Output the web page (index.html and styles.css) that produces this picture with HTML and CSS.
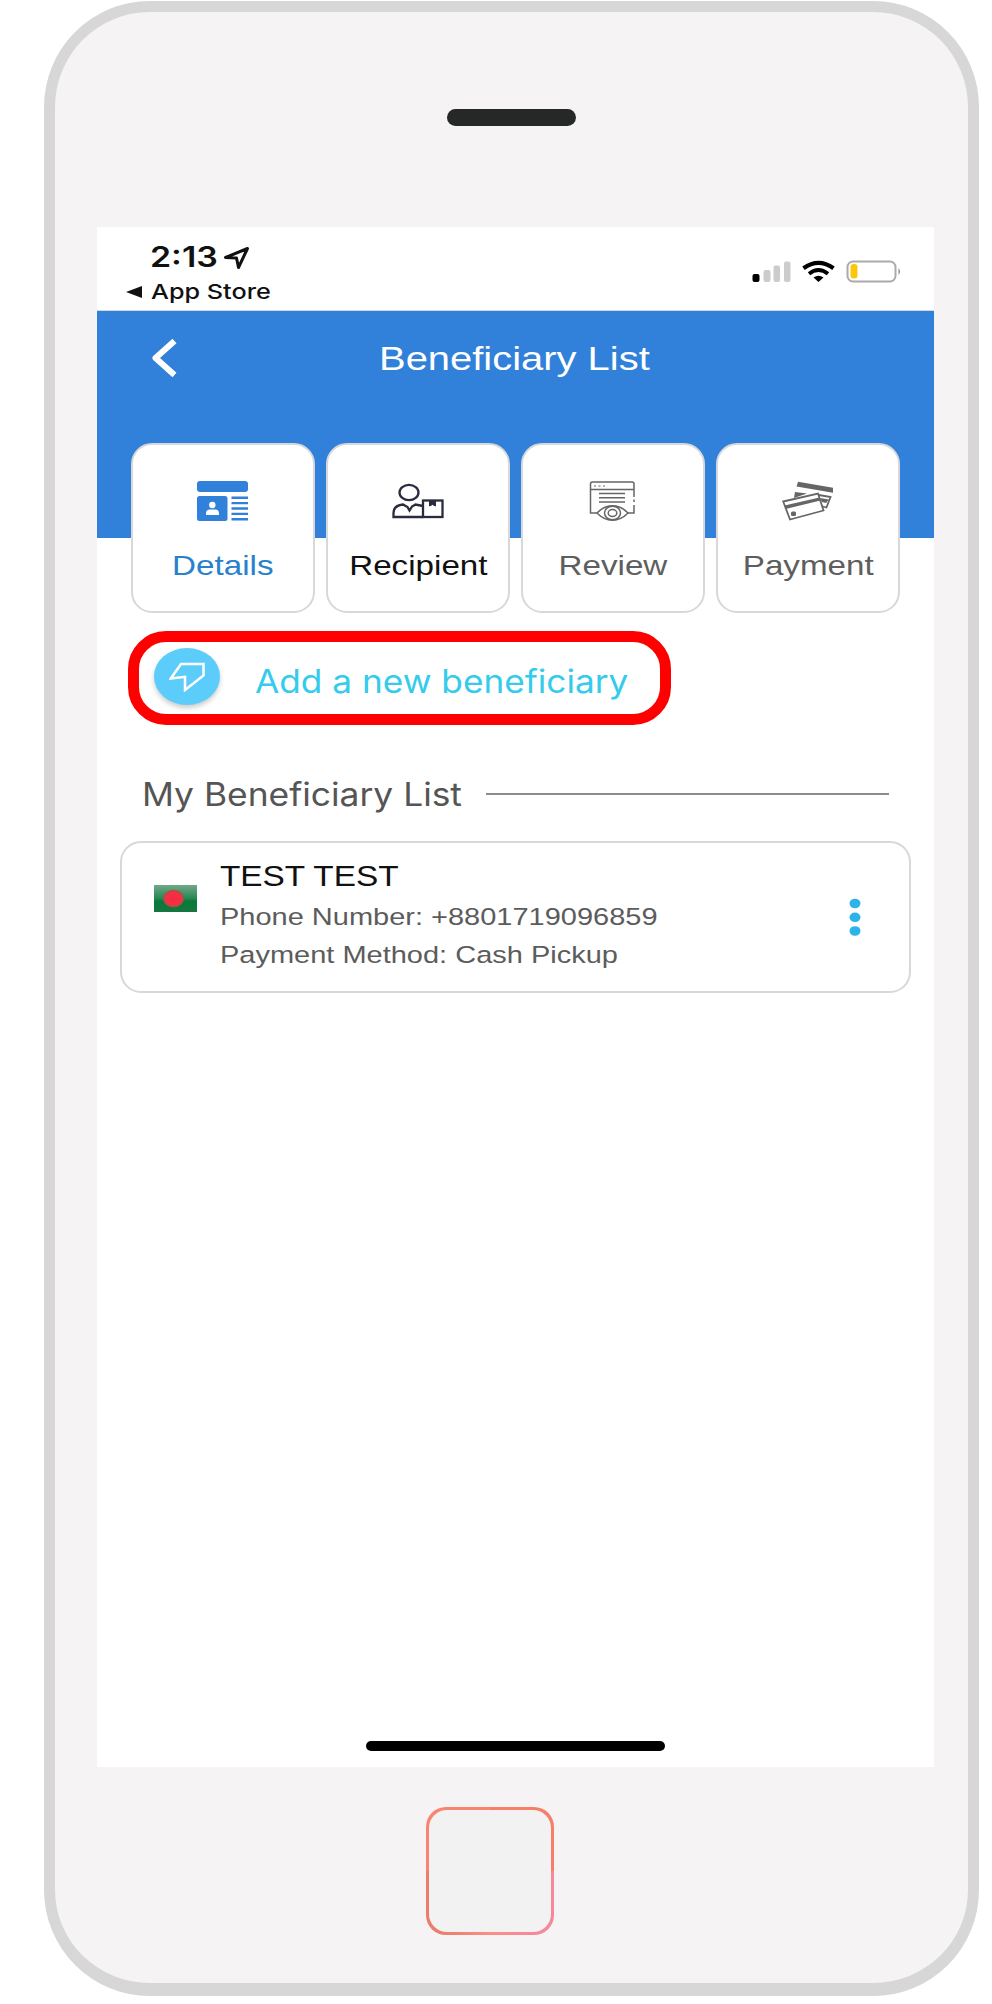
FILE: index.html
```html
<!DOCTYPE html>
<html lang="en">
<head>
<meta charset="utf-8">
<title>Beneficiary List</title>
<link rel="stylesheet" href="styles.css">
</head>
<body>
<div class="phone">
  <div class="speaker"></div>
  <main class="screen">
    <div class="status">
      <div class="status-left">
        <div class="time-row">
          <span class="time">2:13</span>
          <svg class="location" width="27" height="24" viewBox="0 0 27 24"><path d="M2.500 11.500 24.500 2.500 15.500 21.500 13.500 12z" fill="none" stroke="#111" stroke-width="3" stroke-linejoin="round"/></svg>
        </div>
        <div class="back-row">
          <svg width="16" height="12" viewBox="0 0 16 12"><path d="M0 6 16 0V12z" fill="#111"/></svg>
          <span class="back-app">App Store</span>
        </div>
      </div>
      <svg class="status-icons" width="152" height="24" viewBox="0 0 152 24">
        <rect x="0.5" y="14" width="7" height="8" rx="2" fill="#000"/>
        <g fill="#ccc"><rect x="11.5" y="10" width="7" height="12" rx="2"/><rect x="21.5" y="5.500" width="6.500" height="16.500" rx="2"/><rect x="32" y="1.500" width="6.500" height="20.500" rx="2"/></g>
        <g fill="none" stroke="#000" stroke-width="4.200"><path d="M51.500 8.200Q66.500-2.500 81.500 8.200"/><path d="M57 13.800Q66.500 6.300 76 13.800" stroke-width="3.900"/></g>
        <path d="M61.500 17.500Q66.500 14 71.500 17.500L66.500 22z" fill="#000"/>
        <rect x="95.500" y="1.500" width="48" height="20" rx="5.500" fill="none" stroke="#aaa" stroke-width="2"/>
        <rect x="98.500" y="4" width="7" height="14.500" rx="3" fill="#fbc70c"/>
        <path d="M146.500 8Q149.500 11.500 146.500 15z" fill="#888"/>
      </svg>
    </div>
    <header class="header">
      <svg class="back" width="30" height="42" viewBox="0 0 30 42"><path d="M24.500 4 5.500 21 24.500 38" fill="none" stroke="#fff" stroke-width="6" stroke-linejoin="round"/></svg>
      <h1 class="title">Beneficiary List</h1>
    </header>
    <nav class="tabs">
      <div class="tab active">
        <svg width="52" height="40" viewBox="0 0 52 40">
          <g fill="#3180d9"><rect x="0" y="0" width="51" height="11" rx="3"/><rect x="0" y="15" width="30.500" height="25" rx="2.500"/>
          <path d="M34.500 15.500h16.500v2.400H34.500zM34.500 20.900h16.500v2.400H34.500zM34.500 26.300h16.500v2.400H34.500zM34.500 31.700h16.500v2.400H34.500zM34.500 37.100h16.500v2.400H34.500z"/></g>
          <circle cx="15.300" cy="24" r="3.200" fill="#fff"/><path d="M9 34v-1.500q0-4 4-4h5q4 0 4 4V34z" fill="#fff"/>
        </svg>
        <span class="label">Details</span>
      </div>
      <div class="tab current">
        <svg width="52" height="40" viewBox="0 0 52 40" fill="none" stroke="#292b3e" stroke-width="2.300">
          <ellipse cx="17" cy="11.500" rx="9.500" ry="7.700"/>
          <path d="M31 36H1.500V32Q1.500 24.500 11 23.500L15.500 26 17.500 29.500 20 25.500 23.500 23.500 31 25"/>
          <rect x="31" y="19.500" width="19.500" height="16.500"/>
          <path d="M37.500 20v5l3-1.500 3 1.500V20z" fill="#292b3e" stroke-width="1"/>
        </svg>
        <span class="label">Recipient</span>
      </div>
      <div class="tab">
        <svg width="52" height="40" viewBox="0 0 52 40" fill="none" stroke="#666" stroke-width="1.500">
          <path d="M10 32H3.500V3Q3.500 1 5.500 1H45Q47 1 47 3V16M47 18.500v2.500M47 24v8H41M3.500 8.500H47"/>
          <path d="M7 5h2M11.500 5h2M16 5h2" stroke="#999"/>
          <path d="M12 12.500H38M12 16.800H38M12 21.100H38"/>
          <path d="M10 32Q17 24.700 25.500 24.700T41 32Q34 39.200 25.500 39.200T10 32z"/>
          <ellipse cx="25.500" cy="32" rx="8" ry="6.800"/><ellipse cx="25.500" cy="32" rx="4.300" ry="3.500"/>
        </svg>
        <span class="label">Review</span>
      </div>
      <div class="tab">
        <svg width="52" height="40" viewBox="0 0 52 40">
          <path d="M16 .8 51 6.800V11.800L14.500 5.500z" fill="#666"/>
          <path d="M13 11 25 12.500 12 17z" fill="#666"/>
          <g fill="none" stroke="#666" stroke-width="1.800"><path d="M34 13.500 48.500 16 44.500 26.500 39 25"/><path d="M1.200 20.500 36 12.500 41.500 29.500 8 38.500z" fill="#fff"/></g>
          <path d="M2.500 24.500 37.500 16.500 38.500 19.500 3.500 28z" fill="#666"/><path d="M38 17 47 18.500 44 22 40 21z" fill="#666"/>
          <rect x="9" y="30.500" width="5" height="4.500" rx="1.500" fill="#666"/>
        </svg>
        <span class="label">Payment</span>
      </div>
    </nav>
    <div class="add">
      <span class="add-icon"><svg width="36" height="30" viewBox="0 0 36 30"><path d="M1.800 16.500 12 2H34.500V13.500L16 28V14.800z" fill="none" stroke="#fff" stroke-width="2.500"/></svg></span>
      <span class="add-text">Add a new beneficiary</span>
    </div>
    <div class="section">
      <h2 class="section-title">My Beneficiary List</h2>
      <span class="rule"></span>
    </div>
    <article class="card">
      <svg class="flag" width="43" height="27" viewBox="0 0 43 27">
        <defs><linearGradient id="green" x1="0" y1="0" x2="0" y2="1"><stop offset="0" stop-color="#70a987"/><stop offset=".5" stop-color="#288653"/><stop offset=".6" stop-color="#077a3b"/><stop offset="1" stop-color="#16773e"/></linearGradient>
        <radialGradient id="red"><stop offset="0" stop-color="#ff2440"/><stop offset=".7" stop-color="#ec3446"/><stop offset="1" stop-color="#a8503f"/></radialGradient></defs>
        <rect width="43" height="27" fill="url(#green)"/><ellipse cx="19.500" cy="13.500" rx="10.500" ry="8.800" fill="url(#red)"/>
      </svg>
      <div class="info">
        <div class="name">TEST TEST</div>
        <div class="line phone-number">Phone Number: +8801719096859</div>
        <div class="line">Payment Method: Cash Pickup</div>
      </div>
      <svg class="more" width="12" height="38" viewBox="0 0 12 38" fill="#2bb3ea"><ellipse cx="6" cy="5.500" rx="5.500" ry="4.800"/><ellipse cx="6" cy="19.300" rx="5.500" ry="4.800"/><ellipse cx="6" cy="33" rx="5.500" ry="4.800"/></svg>
    </article>
    <div class="home-indicator"></div>
  </main>
  <div class="home-button"><span class="home-face"></span></div>
</div>
</body>
</html>
```
FILE: styles.css
```css
* { box-sizing: border-box; }
body { margin: 0; background: #fff; font-family: "Liberation Sans", Arial, sans-serif; }
svg { display: block; flex: none; }
.phone {
  width: 935px; height: 1995px; margin: 1px 0 0 44px;
  border: 11px solid #d7d7d7; border-bottom-width: 13px; border-radius: 106px;
  background: #f5f3f4; display: flex; flex-direction: column;
}
.speaker { width: 129px; height: 17px; margin: 97px 0 0 392px; border-radius: 9px; background: #252827; flex: none; }
.screen { width: 837px; height: 1540px; margin: 101px 0 0 42px; background: #fff; display: flex; flex-direction: column; flex: none; }
.time, .back-app, .title, .label, .add-text, .section-title, .name, .line { white-space: nowrap; transform-origin: 0 50%; }

.status { height: 84px; flex: none; display: flex; justify-content: space-between; padding: 14px 30px 0 29px; border-bottom: 1px solid #d5d6da; font-family: Inter, sans-serif; color: #111; }
.time-row { display: flex; height: 32px; padding-left: 24px; }
.time { width: 73px; font-size: 28px; font-weight: 600; line-height: 32px; transform: scaleX(1.21); }
.location { margin-top: 5px; }
.back-row { display: flex; align-items: center; gap: 9px; margin-top: 7px; }
.back-app { font-size: 20.500px; font-weight: 500; line-height: 24px; transform: scaleX(1.23); }
.status-icons { margin-top: 19px; }

.header { height: 227px; flex: none; display: flex; padding: 26px 0 0 53px; background: #3180d9; color: #fff; }
.title { margin: 2px 0 0 199px; font-size: 33px; line-height: 40px; font-weight: 400; transform: scaleX(1.21); }

.tabs { position: relative; flex: none; display: grid; grid-template-columns: repeat(4, 184px); gap: 11px; margin: -95px 0 0 34px; }
.tab { height: 170px; border: 2px solid #d8d8da; border-radius: 21px; background: #fff; display: flex; flex-direction: column; align-items: center; padding-top: 36px; color: #5e5e5e; }
.label { margin-top: 29px; font-size: 28px; line-height: 32px; transform-origin: 50% 50%; transform: scaleX(1.185); }
.active { color: #2980cc; }
.current { color: #111; }

.add { width: 543px; height: 94px; flex: none; margin: 18px 0 0 31px; border: 11px solid #f00; border-radius: 38px; display: flex; padding: 6px 0 0 15px; }
.add-icon { width: 66px; height: 57px; border-radius: 50%; background: #5ccdfb; box-shadow: 0 3px 5px #0003; display: flex; align-items: center; justify-content: center; }
.add-text { margin: 14px 0 0 35px; font-family: Inter, sans-serif; font-size: 32px; line-height: 40px; color: #35cbec; transform: scaleX(1.1); }

.section { display: flex; flex: none; align-items: center; margin: 49px 45px 0 45px; }
.section-title { position: relative; top: 1px; width: 344px; margin: 0; font-family: Inter, sans-serif; font-size: 32px; font-weight: 400; line-height: 40px; color: #555; transform: scaleX(1.105); }
.rule { flex: 1; height: 2px; background: #8d8d8d; }

.card { height: 152px; flex: none; margin: 27px 23px 0; border: 2px solid #d8d8d8; border-radius: 21px; display: flex; padding: 17px 48px 0 32px; }
.flag { margin-top: 25px; }
.info { flex: 1; margin-left: 23px; }
.name { margin: 0 0 6px; font-size: 29px; line-height: 32px; color: #111; transform: scaleX(1.15); width: 160px; }
.line { width: 300px; font-size: 24.500px; line-height: 38px; color: #5c5c5c; transform: scaleX(1.183); }
.more { margin-top: 38px; }

.home-indicator { width: 299px; height: 10px; flex: none; margin: auto 0 16px 269px; border-radius: 5px; background: #000; }
.home-button { width: 128px; height: 128px; flex: none; margin: 40px 0 0 371px; padding: 3px; border-radius: 20px; background: conic-gradient(#f77e69 0 90deg, #f6889c 90deg 140deg, #f98f87 180deg, #ec7d6b 220deg 270deg, #f98471 270deg); }
.home-face { display: block; height: 100%; border-radius: 18px; background: #f2f2f2; }
```
